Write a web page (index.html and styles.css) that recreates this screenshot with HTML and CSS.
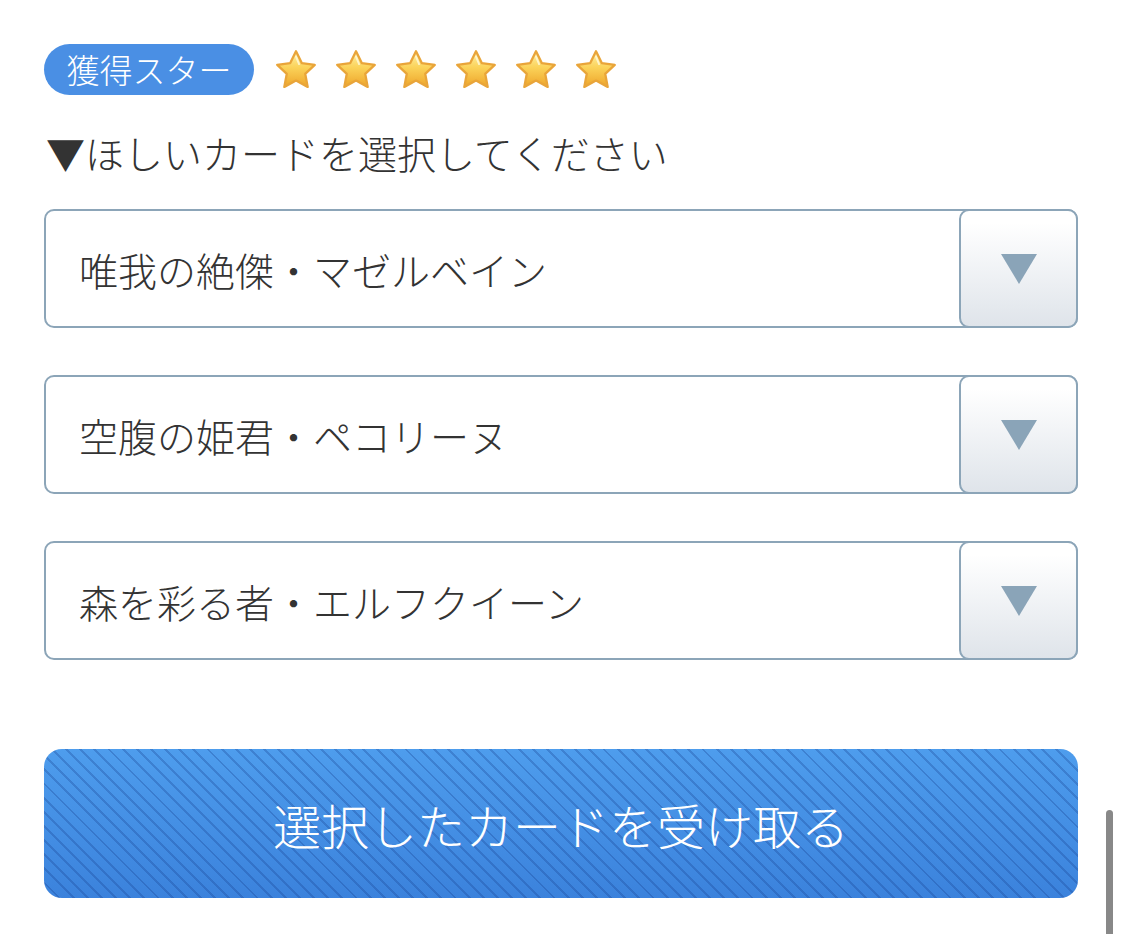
FILE: index.html
```html
<!DOCTYPE html>
<html lang="ja">
<head>
  <meta charset="UTF-8">
  <title>カード選択</title>
  <link rel="stylesheet" href="styles.css">
</head>
<body>

  <div class="star-row">
    <span class="badge">獲得スター</span>
    <div class="stars">
      <svg class="star" viewBox="0 0 24 24"><use href="#star"/></svg>
      <svg class="star" viewBox="0 0 24 24"><use href="#star"/></svg>
      <svg class="star" viewBox="0 0 24 24"><use href="#star"/></svg>
      <svg class="star" viewBox="0 0 24 24"><use href="#star"/></svg>
      <svg class="star" viewBox="0 0 24 24"><use href="#star"/></svg>
      <svg class="star" viewBox="0 0 24 24"><use href="#star"/></svg>
    </div>
  </div>

  <p class="instruction">▼ほしいカードを選択してください</p>

  <div class="select-list">
    <div class="select">
      <span class="select-text">唯我の絶傑・マゼルベイン</span>
      <span class="select-arrow"><i></i></span>
    </div>
    <div class="select">
      <span class="select-text">空腹の姫君・ペコリーヌ</span>
      <span class="select-arrow"><i></i></span>
    </div>
    <div class="select">
      <span class="select-text">森を彩る者・エルフクイーン</span>
      <span class="select-arrow"><i></i></span>
    </div>
  </div>

  <button class="receive-btn">選択したカードを受け取る</button>

  <div class="scrollbar"></div>

  <!-- 星のシンボル -->
  <svg width="0" height="0" class="defs">
    <defs>
      <linearGradient id="starFill" x1="0" y1="0" x2="0" y2="1">
        <stop offset="0" stop-color="#fff1a8"/>
        <stop offset="0.45" stop-color="#fbd35a"/>
        <stop offset="1" stop-color="#eea52a"/>
      </linearGradient>
      <symbol id="star" viewBox="0 0 24 24">
        <path d="M12 2.2l3 6.2 6.8.9-5 4.7 1.3 6.8L12 17.5l-6.1 3.3 1.3-6.8-5-4.7 6.8-.9z"
              fill="url(#starFill)" stroke="#e9a53a" stroke-width="1.2" stroke-linejoin="round"/>
        <path d="M12 5l1.6 3.9" stroke="#fffbe0" stroke-width="1" stroke-linecap="round" opacity="0.8"/>
      </symbol>
    </defs>
  </svg>

</body>
</html>
```

FILE: styles.css
```css
body {
  font-family: "Noto Sans CJK JP", "Noto Sans", sans-serif;
  font-weight: 300;
  color: #333;
  margin: 0;
  padding: 44px 46px 0 44px;
  background: #fff;
}
.star-row {
  display: flex;
  align-items: center;
  gap: 19px;
}
.badge {
  display: inline-block;
  width: 210px;
  height: 51px;
  line-height: 51px;
  text-align: center;
  border-radius: 26px;
  background-color: #4a8fe4;
  color: #fff;
  font-size: 33px;
}
.stars {
  display: flex;
  gap: 14px;
}
.star {
  width: 46px;
  height: 46px;
}
.instruction {
  font-size: 39px;
  line-height: 46px;
  margin: 34px 0 34px 2px;
  color: #333;
}
.select-list {
  display: flex;
  flex-direction: column;
  gap: 47px;
}
.select {
  display: flex;
  align-items: stretch;
  height: 115px;
  border: 2px solid #8ca5b8;
  border-radius: 10px;
  background: #fff;
}
.select-text {
  flex: 1;
  display: flex;
  align-items: center;
  padding-left: 33px;
  font-size: 39px;
  color: #333;
}
.select-arrow {
  width: 115px;
  margin: -2px -2px -2px 0;
  border: 2px solid #8ca5b8;
  border-radius: 10px;
  background: linear-gradient(#ffffff 10%, #dfe4ea);
  display: flex;
  align-items: center;
  justify-content: center;
}
.select-arrow i {
  width: 0;
  height: 0;
  border-left: 18px solid transparent;
  border-right: 18px solid transparent;
  border-top: 30px solid #8aa4b8;
}
.receive-btn {
  display: block;
  width: 100%;
  height: 149px;
  margin-top: 89px;
  border: none;
  border-radius: 18px;
  color: #fff;
  font-family: inherit;
  font-weight: 300;
  font-size: 48px;
  background:
    repeating-linear-gradient(45deg, rgba(20, 60, 140, 0.28) 0 2px, transparent 2px 10px),
    linear-gradient(#4e9ded, #3b82dc);
}
.scrollbar {
  position: absolute;
  left: 1106px;
  top: 810px;
  width: 7px;
  height: 124px;
  border-radius: 4px 4px 0 0;
  background: #888;
}
.defs {
  position: absolute;
}
```
